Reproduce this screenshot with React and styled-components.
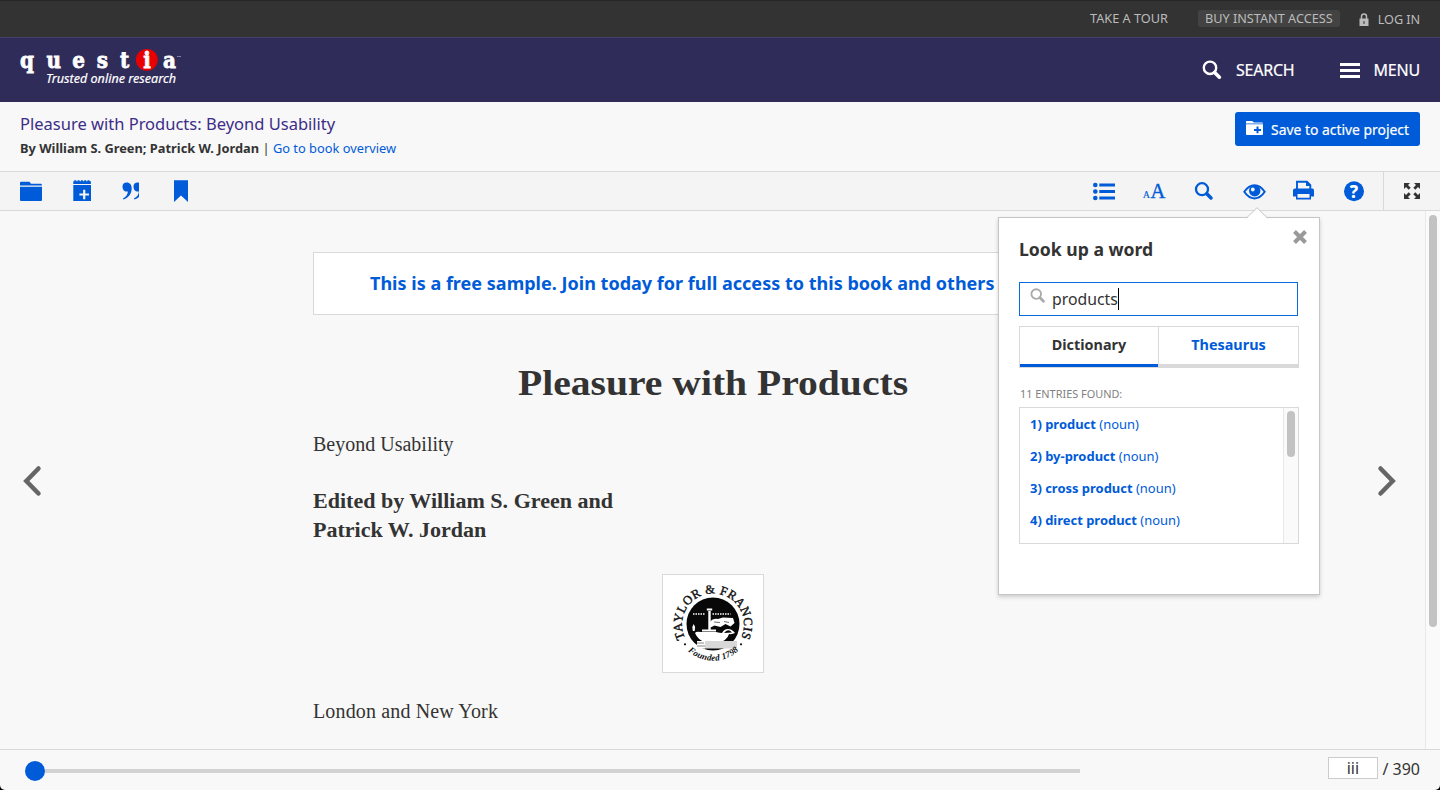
import React from "react";
import styled, { createGlobalStyle } from "styled-components";

const sans = `"Noto Sans", "Open Sans", sans-serif`;
const serif = `"Liberation Serif", Georgia, serif`;
const blue = "#005bd8";
const ink = "#333";
const line = "#d9d9d9";

const Global = createGlobalStyle`
  * { box-sizing: border-box; }
  body { margin: 0; background: #000; font-family: ${sans}; color: ${ink}; }
`;

const Page = styled.div`
  height: 790px;
  display: flex;
  flex-direction: column;
  background: #f8f8f8;
  border-radius: 0 0 5px 5px;
  overflow: hidden;
`;

const TopBar = styled.div`
  height: 37px;
  flex: none;
  display: flex;
  justify-content: flex-end;
  align-items: center;
  padding-right: 20px;
  background: #333;
  border-top: 1px solid #262626;
  color: #bbb;
  font-size: 12.7px;
  line-height: 17px;
`;
const TopLink = styled.span`
  padding-bottom: ${(p) => p.$lift || 0}px;
  letter-spacing: ${(p) => p.$spacing || 0}px;
`;
const TopPill = styled.span`
  margin: -1px 19px 0 30px;
  width: 142px;
  height: 17px;
  line-height: 16px;
  text-align: center;
  background: #434343;
  border-radius: 3px;
  white-space: nowrap;
`;
const LockIcon = styled.svg`
  margin-right: 9px;
`;

const Header = styled.header`
  height: 65px;
  flex: none;
  display: flex;
  justify-content: space-between;
  align-items: center;
  padding: 0 20px 0 19px;
  background: #302c5a;
  border-top: 1px solid #44416c;
`;
const Logo = styled.svg`
  display: block;
`;
const HeaderNav = styled.nav`
  display: flex;
  align-items: center;
  color: #fff;
  font-size: 16px;
`;
const NavLabel = styled.span`
  margin-left: 14px;
  margin-right: ${(p) => p.$after || 0}px;
  letter-spacing: -0.2px;
  -webkit-text-stroke: 0.2px #fff;
`;

const TitleRow = styled.div`
  height: 69px;
  flex: none;
  display: flex;
  justify-content: space-between;
  padding: 10px 20px;
`;
const BookTitle = styled.div`
  font-size: 16.5px;
  line-height: 24px;
  color: #3d2d87;
`;
const Byline = styled.div`
  font-size: 12.84px;
  line-height: 24px;
`;
const Link = styled.a`
  color: ${blue};
`;
const SaveButton = styled.button`
  width: 185px;
  height: 34px;
  display: flex;
  align-items: center;
  gap: 8px;
  padding: 0 0 0 11px;
  border: 0;
  border-radius: 3px;
  background: ${blue};
  color: #fff;
  font: 400 13.9px ${sans};
  -webkit-text-stroke: 0.2px #fff;
  white-space: nowrap;
`;

const Toolbar = styled.div`
  height: 40px;
  flex: none;
  display: flex;
  background: #f4f4f4;
  border-top: 1px solid ${line};
  border-bottom: 1px solid ${line};
  color: ${blue};
`;
const Tools = styled.div`
  display: flex;
  margin-left: ${(p) => (p.$end ? "auto" : "6px")};
  margin-right: ${(p) => (p.$end ? "4px" : "0")};
`;
const Tool = styled.svg`
  display: block;
  width: 50px;
  height: 38px;
`;
const ExpandTool = styled.div`
  width: 57px;
  border-left: 1px solid ${line};
  color: ${ink};
`;

const Reader = styled.main`
  flex: 1;
  min-height: 0;
  display: flex;
  align-items: stretch;
`;
const Turn = styled.button`
  display: flex;
  width: ${(p) => p.$width}px;
  padding: 2px ${(p) => (p.$next ? 28 : 0)}px 0 ${(p) => (p.$next ? 0 : 22)}px;
  justify-content: ${(p) => (p.$next ? "flex-end" : "flex-start")};
  align-items: center;
  background: none;
  border: 0;
`;
const Article = styled.article`
  width: 800px;
  padding-top: 41px;
  font-family: ${serif};
  font-size: 20px;
  line-height: 29px;
`;
const Banner = styled.div`
  height: 63px;
  padding-left: 56px;
  background: #fff;
  border: 1px solid ${line};
  color: ${blue};
  font: 700 18px/61px ${sans};
  letter-spacing: 0.015px;
`;
const Heading = styled.h1`
  margin: 47px 0 0;
  font-size: 36px;
  line-height: 42px;
  text-align: center;
  transform: scaleX(1.1);
`;
const Para = styled.p`
  margin: ${(p) => p.$top}px 0 0;
  font-weight: ${(p) => (p.$bold ? 700 : 400)};
  font-size: ${(p) => (p.$bold ? 20.5 : 20)}px;
  letter-spacing: ${(p) => p.$spacing || 0}px;
  transform: ${(p) => (p.$bold ? "scaleX(1.075)" : "none")};
  transform-origin: left;
`;
const Emblem = styled.svg`
  display: block;
  margin: 29px auto 0;
  background: #fff;
  border: 1px solid ${line};
`;
const PageScroll = styled.div`
  width: 15px;
  border-left: 1px solid #e8e8e8;
  background: #fafafa;
  padding: ${(p) => p.$top}px 3px;
`;
const PageThumb = styled.div`
  width: 8px;
  height: ${(p) => p.$height}px;
  border-radius: 4px;
  background: #c2c2c2;
`;

const Footer = styled.footer`
  height: 41px;
  flex: none;
  display: flex;
  align-items: center;
  padding: 2px 20px 0 25px;
  border-top: 1px solid ${line};
  font-size: 16px;
`;
const Knob = styled.div`
  width: 20px;
  height: 20px;
  border-radius: 50%;
  background: ${blue};
`;
const Track = styled.div`
  width: 1035px;
  height: 4px;
  background: #d2d2d2;
`;
const PageField = styled.div`
  margin-left: auto;
  margin-right: 4.5px;
  margin-top: -6px;
  width: 50px;
  height: 22px;
  border: 1px solid #ccc;
  background: #fff;
  text-align: center;
  line-height: 20px;
`;
const PageTotal = styled.span`
  margin-top: -4px;
`;

const Popover = styled.section`
  position: absolute;
  left: 998px;
  top: 217px;
  width: 322px;
  height: 378px;
  padding: 19px 20px;
  background: #fff;
  border: 1px solid #c6c6c6;
  box-shadow: 0 2px 4px rgba(0, 0, 0, 0.18);
`;
const Arrow = styled.svg`
  position: absolute;
  left: 247px;
  top: -11px;
`;
const CloseIcon = styled.svg`
  position: absolute;
  right: 11px;
  top: 11px;
`;
const PopTitle = styled.h2`
  margin: 0;
  font-size: 17.6px;
  line-height: 25px;
`;
const SearchField = styled.div`
  display: flex;
  width: 279px;
  height: 34px;
  margin-top: 20px;
  padding: 5px 0 0 10px;
  border: 1px solid #0a6be0;
  font-size: 15.8px;
  line-height: 23px;
`;
const Typed = styled.span`
  height: 22px;
  margin-left: 6.5px;
  border-right: 1px solid #000;
`;
const TabRow = styled.div`
  display: flex;
  width: 280px;
  height: 42px;
  margin-top: 10px;
  border: 1px solid ${line};
`;
const Tab = styled.div`
  width: ${(p) => p.$width}px;
  height: 40px;
  text-align: center;
  font-size: 14.4px;
  font-weight: 700;
  line-height: 36px;
  color: ${(p) => (p.$active ? ink : blue)};
  border-bottom: 3px solid ${(p) => (p.$active ? blue : line)};
  border-left: ${(p) => (p.$active ? "0" : `1px solid ${line}`)};
`;
const Count = styled.div`
  margin: 18px 0 5px 1px;
  font-size: 10.9px;
  line-height: 16px;
  color: #808080;
`;
const Results = styled.div`
  display: flex;
  width: 280px;
  height: 137px;
  border: 1px solid ${line};
`;
const ResultList = styled.div`
  flex: 1;
  padding: 0 10px;
`;
const Result = styled.div`
  height: 32px;
  font-size: 12.96px;
  line-height: 32px;
  color: ${blue};
`;

const Cell = ({ children }) => (
  <Tool viewBox="0 0 50 38" fill="currentColor">{children}</Tool>
);
const Magnifier = ({ size = 20, color = "currentColor" }) => (
  <svg width={size} height={size} viewBox="0 0 20 20" fill="none" stroke={color}>
    <circle cx="8" cy="7.8" r="6.2" strokeWidth="2.4" />
    <path d="M12.600 12.400 17.400 17.200" strokeWidth="3.600" strokeLinecap="round" />
  </svg>
);

const logoLetters = [
  ["q", 7.5], ["u", 34.3], ["e", 59], ["s", 83], ["t", 105], ["i", 127.5], ["a", 150],
];
const entries = ["product", "by-product", "cross product", "direct product"];

export default function App() {
  return (
    <>
      <Global />
      <Page>
        <TopBar>
          <TopLink $lift={1}>TAKE A TOUR</TopLink>
          <TopPill>BUY INSTANT ACCESS</TopPill>
          <LockIcon width="10" height="13" viewBox="0 0 9 13">
            <path d="M2 6V3.4a2.5 2.5 0 0 1 5 0V6" fill="none" stroke="#bbb" strokeWidth="1.5" />
            <path fill="#bbb" fillRule="evenodd" d="M0 5.5h9V13H0zM4 8v3h1V8z" />
          </LockIcon>
          <TopLink $spacing={-0.1}>LOG IN</TopLink>
        </TopBar>

        <Header>
          <Logo width="162" height="46" viewBox="0 0 162 46">
            <circle cx="127.800" cy="12.800" r="10.900" fill="#e90000" />
            <g fill="#fff" stroke="#fff" strokeWidth="0.700" fontFamily="DejaVu Serif" fontWeight="700" fontSize="20"
              textAnchor="middle" transform="translate(0.500 20.800) scale(1 1.080)">
              {logoLetters.map(([l, x]) => (
                <text key={l} x={x} y="0">{l}</text>
              ))}
            </g>
            <text x="158" y="10" fill="#fff" fontSize="2.500" fontFamily="Noto Sans">TM</text>
            <text x="27" y="36.300" fill="#fff" stroke="#fff" strokeWidth="0.200" fontSize="13" fontStyle="italic"
              fontFamily="Noto Sans" textLength="130" lengthAdjust="spacingAndGlyphs">Trusted online research</text>
          </Logo>
          <HeaderNav>
            <Magnifier size={20} />
            <NavLabel $after={45}>SEARCH</NavLabel>
            <svg width="20" height="16" viewBox="0 0 20 16" fill="#fff">
              <path d="M0 1h20v3H0zM0 7h20v3H0zM0 13h20v3H0z" />
            </svg>
            <NavLabel>MENU</NavLabel>
          </HeaderNav>
        </Header>

        <TitleRow>
          <div>
            <BookTitle>Pleasure with Products: Beyond Usability</BookTitle>
            <Byline>
              <b>By William S. Green; Patrick W. Jordan</b> | <Link>Go to book overview</Link>
            </Byline>
          </div>
          <SaveButton>
            <svg width="17" height="16" viewBox="0 0 17 16" fill="#fff">
              <path d="M0 2V.8Q0 0 .8 0h5.400L8 1.400h8q1 0 1 1H0z" />
              <path fillRule="evenodd" d="M0 3.300h17V13q0 1-1 1H1q-1 0-1-1zM10.500 5.500v2.400H8v2h2.500v2.400h2V9.900H15v-2h-2.500V5.500z" />
            </svg>
            Save to active project
          </SaveButton>
        </TitleRow>

        <Toolbar>
          <Tools>
            <Cell>
              <path d="M14 13.500V10.700q0-1 1-1h8.500l1.500 2h10q1 0 1 1.800z" />
              <path d="M14 14.700h22V28q0 1-1 1H15q-1 0-1-1z" />
            </Cell>
            <Cell>
              <path d="M17.300 9.300h1V8.200h2v1.100h1.300V8.200h2v1.100h1.300V8.200h2v1.100h1.300V8.200h2v1.100h1.300V8.200h2v1.100h1.400V12H17.300z" />
              <path fillRule="evenodd" d="M17.300 13H35v16H17.300zM27.100 17.700v3.700h-3.700v2.200h3.700v3.700h2.200v-3.700H33v-2.200h-3.700v-3.700z" />
            </Cell>
            <Cell>
              <svg x="0" y="0" width="33" height="38">
                <path id="mark" d="M16.500 14.500a4.200 4.200 0 0 1 4.300-4c3 0 4.900 2.300 4.900 6 0 5-3 9.300-8.200 11.100l-.6-1.100c3-1.500 4.700-4 5-7.100-3 1-5.400-1.500-5.400-4.900z" />
                <use href="#mark" x="11" />
              </svg>
            </Cell>
            <Cell>
              <path d="M18 8.300h14V30l-7-6.500L18 30z" />
            </Cell>
          </Tools>
          <Tools $end>
            <Cell>
              <circle cx="16.300" cy="13" r="2.300" /><circle cx="16.300" cy="19.500" r="2.300" /><circle cx="16.300" cy="26" r="2.300" />
              <path d="M20.300 11.500H36v3H20.300zM20.300 18H36v3H20.300zM20.300 24.500H36v3H20.300z" />
            </Cell>
            <Cell>
              <g stroke="currentColor" fontFamily="Liberation Serif">
                <text x="14" y="26" strokeWidth="0.200" fontSize="9.500">A</text>
                <text x="21.500" y="26" strokeWidth="0.400" fontSize="20.500">A</text>
              </g>
            </Cell>
            <Cell>
              <g fill="none" stroke="currentColor">
                <circle cx="23" cy="17.200" r="6" strokeWidth="2.300" />
                <path d="M27.800 21.800l4.200 4.200" strokeWidth="3.500" strokeLinecap="round" />
              </g>
            </Cell>
            <Cell>
              <path d="M15.300 19.800q4.300-6.600 10.200-6.600t10.200 6.600q-4.300 6.600-10.200 6.600t-10.200-6.600z" fill="none" stroke="currentColor" strokeWidth="2" />
              <circle cx="25.700" cy="18.700" r="5.700" />
              <circle cx="23.800" cy="17.500" r="1.900" fill="#f4f4f4" />
            </Cell>
            <Cell>
              <path d="M18 17V9.800h10l3.300 3.300V17" fill="none" stroke="currentColor" strokeWidth="1.900" />
              <path d="M27 9v5h5z" />
              <path fillRule="evenodd" d="M16 16.500h17.500q1.500 0 1.500 2V24.500h-3v3H17v-3h-3v-6q0-2 2-2zM18.500 22v3.800h12V22z" />
            </Cell>
            <Cell>
              <circle cx="25" cy="19.300" r="10" />
              <text x="25" y="25.600" textAnchor="middle" fill="#fff" fontFamily="Noto Sans" fontSize="17" fontWeight="800">?</text>
            </Cell>
          </Tools>
          <ExpandTool>
            <svg width="56" height="38" viewBox="0 0 56 38" fill="currentColor">
              {[[1, 1], [-1, 1], [1, -1], [-1, -1]].map(([sx, sy]) => (
                <path key={`${sx}${sy}`} transform={`translate(28 19) scale(${sx} ${sy})`}
                  d="M8 8V2L6 4 3.300 1.300 1.300 3.300 4 6 2 8z" />
              ))}
            </svg>
          </ExpandTool>
        </Toolbar>

        <Reader>
          <Turn $width={313}>
            <svg width="20" height="32" viewBox="0 0 20 32">
              <path d="M16.500 3.500 4.300 16l12.200 12.500" fill="none" stroke="#666" strokeWidth="4.500" strokeLinecap="round" />
            </svg>
          </Turn>
          <Article>
            <Banner>This is a free sample. Join today for full access to this book and others</Banner>
            <Heading>Pleasure with Products</Heading>
            <Para $top={26}>Beyond Usability</Para>
            <Para $top={28} $bold>Edited by William S. Green and<br />Patrick W. Jordan</Para>
            <Emblem width="102" height="99" viewBox="1 1 100 97">
              <defs>
                <path id="upper" d="M23.200 64.200A31 31 0 1 1 78.800 64.200" />
                <path id="lower" d="M23 74A37 37 0 0 0 79 74" />
              </defs>
              <circle cx="51" cy="50" r="26.500" fill="#080808" />
              <g fill="#fff">
                <path d="M46.300 37h2.400v19h-2.400zM44.800 34.500h5.400v2h-5.400z" />
                <path d="M48 48q3-4 8-3l5-1.500 10 .5 1.500 5-4 3.500-5-2.500-5 3-6-1.500-5 2.500z" />
                <path d="M33 59q1-2 6-1h15q4 1 6 1 2-4 6-4 4 0 7 4-3 1.500-6 1-2 7-11 8.500H44q-8-2-11-9.500zM40 55.500h14v2H40z" />
                <path d="M31.700 50l1.400 3-.5 4h-1.800l-.5-4z" />
              </g>
              <path d="M62 59q4-5 8-.5z" fill="#080808" />
              <path d="M31 40h12M50.500 40h18" fill="none" stroke="#fff" strokeWidth="1.600" strokeDasharray="1.500 1" />
              <path d="M52 48l6 .500M62 47.500l5 1" stroke="#080808" strokeWidth="0.600" />
              <path d="M35 67h40v7.500H35z" fill="#d8d8d8" />
              <path d="M35 67h8v7.500h-8z" fill="#fff" />
              <path d="M35 69h7M35 72h8" stroke="#555" strokeWidth="0.700" />
              <g fill="#111" fontFamily="Liberation Serif">
                <text fontSize="12.500" stroke="#111" strokeWidth="0.400"><textPath href="#upper" textLength="125">TAYLOR &amp; FRANCIS</textPath></text>
                <text fontSize="9" fontWeight="700" fontStyle="italic"><textPath href="#lower" startOffset="4" textLength="56">Founded 1798</textPath></text>
                <circle cx="23" cy="70.300" r="1.100" /><circle cx="79" cy="70.300" r="1.100" />
              </g>
            </Emblem>
            <Para $top={24} $spacing={0.15}>London and New York</Para>
          </Article>
          <Turn $width={312} $next>
            <svg width="20" height="32" viewBox="0 0 20 32">
              <path d="M3.500 3.500 15.700 16 3.500 28.500" fill="none" stroke="#666" strokeWidth="4.500" strokeLinecap="round" />
            </svg>
          </Turn>
          <PageScroll $top={4}><PageThumb $height={412} /></PageScroll>
        </Reader>

        <Footer>
          <Knob />
          <Track />
          <PageField>iii</PageField>
          <PageTotal>/ 390</PageTotal>
        </Footer>
      </Page>

      <Popover>
        <Arrow width="22" height="12" viewBox="0 0 22 12">
          <path d="M0 12 11 1l11 11z" fill="#fff" />
          <path d="M.500 11 11 .700 21.500 11" fill="none" stroke="#c6c6c6" />
        </Arrow>
        <CloseIcon width="16" height="16" viewBox="0 0 16 16">
          <path d="M2.500 2.500l11 11M13.500 2.500l-11 11" stroke="#999" strokeWidth="4" />
        </CloseIcon>
        <PopTitle>Look up a word</PopTitle>
        <SearchField>
          <Magnifier size={15.5} color="#aaa" />
          <Typed>products</Typed>
        </SearchField>
        <TabRow>
          <Tab $active $width={138}>Dictionary</Tab>
          <Tab $width={140}>Thesaurus</Tab>
        </TabRow>
        <Count>11 ENTRIES FOUND:</Count>
        <Results>
          <ResultList>
            {entries.map((word, i) => (
              <Result key={word}><b>{i + 1}) {word}</b> (noun)</Result>
            ))}
          </ResultList>
          <PageScroll $top={3}><PageThumb $height={46} /></PageScroll>
        </Results>
      </Popover>
    </>
  );
}
